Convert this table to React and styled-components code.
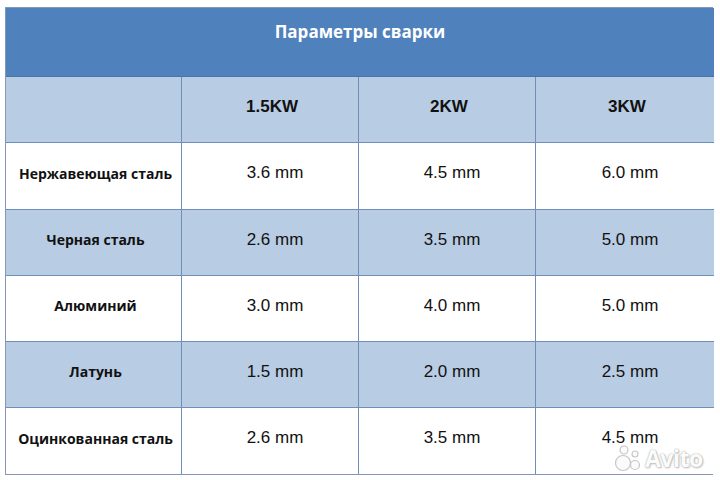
import React from "react";
import styled, { createGlobalStyle } from "styled-components";

const Global = createGlobalStyle`
  html, body { margin: 0; padding: 0; background: #ffffff; }
  body { width: 720px; height: 480px; overflow: hidden; }
`;

const Page = styled.div`
  position: relative;
  width: 720px;
  height: 480px;
  padding: 7px 7px 0 5px;
  box-sizing: border-box;
  background: #fff;
`;

const Table = styled.div`
  width: 708px;
  display: grid;
  grid-template-columns: 176px 177px 177px 178px;
  border: 1px solid #8497b5;
  box-sizing: border-box;
`;

const Title = styled.div`
  grid-column: 1 / -1;
  height: 69px;
  background: #4f81bd;
  color: #ffffff;
  font-family: "Open Sans", "Noto Sans", sans-serif;
  font-weight: 700;
  font-size: 17px;
  text-align: center;
  padding-top: 12px;
  box-sizing: border-box;
  border-bottom: 1px solid #4a74a8;
`;

const Cell = styled.div`
  height: ${(p) => p.$h}px;
  box-sizing: border-box;
  display: flex;
  align-items: center;
  justify-content: center;
  padding-bottom: 6px;
  padding-left: ${(p) => p.$shift}px;
  background: ${(p) => (p.$shade ? "#b8cce4" : "#ffffff")};
  border-right: ${(p) => (p.$last ? "none" : "1px solid #6f8fb8")};
  border-bottom: ${(p) => (p.$bottom ? "none" : "1px solid #6f8fb8")};
  color: #111;
`;

const Label = styled.span`
  font-family: "Open Sans", "Noto Sans", sans-serif;
  font-weight: 700;
  font-size: 14px;
`;

const Head = styled.span`
  font-family: "Liberation Sans", Arial, sans-serif;
  font-weight: 700;
  font-size: 17px;
`;

const Value = styled.span`
  font-family: "Liberation Sans", Arial, sans-serif;
  font-size: 17px;
`;

const Watermark = styled.div`
  position: absolute;
  left: 614px;
  top: 444px;
  display: flex;
  align-items: center;
  gap: 1px;
  pointer-events: none;
`;

const WmText = styled.span`
  font-family: "Open Sans", "Noto Sans", sans-serif;
  font-weight: 700;
  font-size: 23px;
  line-height: 26px;
  letter-spacing: -0.5px;
  color: #fbfbfb;
  text-shadow: 0 0 1px #b4b4b4, 0 0 2px #c4c4c4, 1px 1px 2px #bdbdbd;
`;

const headers = ["", "1.5KW", "2KW", "3KW"];
const rows = [
  ["Нержавеющая сталь", "3.6 mm", "4.5 mm", "6.0 mm"],
  ["Черная сталь", "2.6 mm", "3.5 mm", "5.0 mm"],
  ["Алюминий", "3.0 mm", "4.0 mm", "5.0 mm"],
  ["Латунь", "1.5 mm", "2.0 mm", "2.5 mm"],
  ["Оцинкованная сталь", "2.6 mm", "3.5 mm", "4.5 mm"],
];
const rowHeights = [67, 66, 66, 66, 66];

export default function App() {
  return (
    <Page>
      <Global />
      <Table>
        <Title>Параметры сварки</Title>
        {headers.map((h, i) => (
          <Cell key={"h" + i} $h={66} $shade $last={i === 3} $shift={4}>
            <Head>{h}</Head>
          </Cell>
        ))}
        {rows.map((r, ri) =>
          r.map((v, ci) => (
            <Cell
              key={ri + "-" + ci}
              $h={rowHeights[ri]}
              $shade={ri % 2 === 1}
              $last={ci === 3}
              $bottom={ri === rows.length - 1}
              $shift={ci === 0 ? 4 : 10}
            >
              {ci === 0 ? <Label>{v}</Label> : <Value>{v}</Value>}
            </Cell>
          ))
        )}
      </Table>
      <Watermark>
        <svg width="30" height="28" viewBox="0 0 30 28">
          <g fill="#fbfbfb" stroke="#c6c6c6" strokeWidth="1.2">
            <circle cx="9" cy="19" r="7.5" />
            <circle cx="21" cy="21" r="4.5" />
            <circle cx="10" cy="6" r="4" />
            <circle cx="21" cy="10" r="3" />
          </g>
        </svg>
        <WmText>Avito</WmText>
      </Watermark>
    </Page>
  );
}
